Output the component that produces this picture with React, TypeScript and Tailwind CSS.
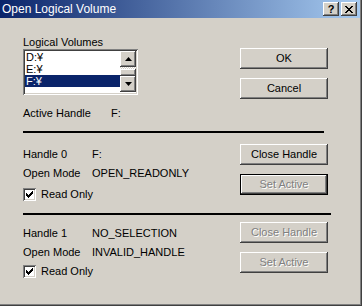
import React from 'react';

const raised =
  'bg-[#d4d0c8] shadow-[inset_-1px_-1px_#404040,inset_1px_1px_#ffffff,inset_-2px_-2px_#808080,inset_2px_2px_#d4d0c8]';
const sunken =
  'shadow-[inset_1px_1px_#808080,inset_-1px_-1px_#ffffff,inset_2px_2px_#404040,inset_-2px_-2px_#d4d0c8]';

const Button: React.FC<{ label: string; disabled?: boolean; isDefault?: boolean }> = ({ label, disabled, isDefault }) => (
  <div
    className={`h-[21px] w-[88px] flex items-center justify-center ${raised} ${
      isDefault ? 'border border-black' : ''
    } ${disabled ? 'text-[#808080] [text-shadow:1px_1px_0_#ffffff]' : 'text-black'}`}
  >
    {label}
  </div>
);

const Checkbox: React.FC<{ label: string }> = ({ label }) => (
  <div className="flex items-center h-[13px] gap-[5px]">
    <div className={`size-[13px] bg-white flex items-center justify-center ${sunken}`}>
      <svg width="7" height="7" viewBox="0 0 7 7">
        <path d="M0 2h1v1h1v1h1V3h1V2h1V1h1V0h1v3h-1v1h-1v1h-1v1h-1v1h-1V6H1V5H0z" fill="#000" />
      </svg>
    </div>
    <span>{label}</span>
  </div>
);

const Row: React.FC<{ label: string; value: string; labelWidth?: string; className?: string }> = ({
  label,
  value,
  labelWidth = 'w-[69px]',
  className = '',
}) => (
  <div className={`flex h-[13px] leading-[13px] ${className}`}>
    <span className={labelWidth}>{label}</span>
    <span>{value}</span>
  </div>
);

const Arrow: React.FC<{ up?: boolean }> = ({ up }) => (
  <div className={`h-[16px] w-[16px] flex items-center justify-center ${raised}`}>
    <svg width="7" height="4" viewBox="0 0 7 4">
      {up ? <path d="M3.5 0L7 4H0z" fill="#000" /> : <path d="M0 0h7L3.5 4z" fill="#000" />}
    </svg>
  </div>
);

const volumes = ['D:¥', 'E:¥', 'F:¥'];

export default function App() {
  return (
    <div className="w-[362px] h-[306px] bg-[#d4d0c8] flex flex-col overflow-hidden font-['Liberation_Sans',Arial,sans-serif] text-[11px] text-black shadow-[inset_-1px_-1px_#404040,inset_-2px_-2px_#808080]">
      {/* title bar */}
      <div className="h-[18px] mr-[2px] flex items-center justify-between bg-[linear-gradient(to_right,#0a246a,#a6caf0)] pl-[2px] pr-[3px]">
        <span className="text-white text-[12px] leading-none">Open Logical Volume</span>
        <div className="flex gap-[2px]">
          <div className={`w-[16px] h-[14px] flex items-center justify-center font-bold text-[11px] leading-none ${raised}`}>?</div>
          <div className={`w-[16px] h-[14px] flex items-center justify-center ${raised}`}>
            <svg width="8" height="7" viewBox="0 0 8 7">
              <path d="M0 0L7 7M1 0L8 7M7 0L0 7M8 0L1 7" stroke="#000" strokeWidth="1" />
            </svg>
          </div>
        </div>
      </div>

      <div className="pl-[23px] flex flex-col">
        {/* volumes */}
        <div className="flex">
          <div className="w-[217px] pt-[18px]">
            <div className="h-[13px] leading-[13px]">Logical Volumes</div>
            <div className={`h-[46px] w-[115px] bg-white p-[2px] flex ${sunken}`}>
              <div className="flex-1 pt-[0px]">
                {volumes.map((v) => (
                  <div
                    key={v}
                    className={`h-[12px] leading-[12px] pl-[1px] ${v === 'F:¥' ? 'bg-[#0a246a] text-white' : ''}`}
                  >
                    {v}
                  </div>
                ))}
              </div>
              <div className="w-[16px] flex flex-col">
                <Arrow up />
                <div className="h-[2px] bg-[repeating-conic-gradient(#ffffff_0_25%,#d4d0c8_0_50%)] bg-[length:2px_2px]" />
                <div className={`h-[7px] ${raised}`} />
                <Arrow />
              </div>
            </div>
            <Row label="Active Handle" value="F:" labelWidth="w-[88px]" className="mt-[12px]" />
          </div>
          <div className="pt-[30px] flex flex-col gap-[9px]">
            <Button label="OK" />
            <Button label="Cancel" />
          </div>
        </div>

        <div className="mt-[11px] h-[2px] w-[301px] bg-black" />

        {/* handle 0 */}
        <div className="flex">
          <div className="w-[217px] pt-[15px]">
            <Row label="Handle 0" value="F:" />
            <Row label="Open Mode" value="OPEN_READONLY" className="mt-[6px]" />
            <div className="mt-[8px]">
              <Checkbox label="Read Only" />
            </div>
          </div>
          <div className="pt-[11px] flex flex-col gap-[9px]">
            <Button label="Close Handle" />
            <Button label="Set Active" disabled isDefault />
          </div>
        </div>

        <div className="mt-[12px] h-[2px] w-[308px] bg-black" />

        {/* handle 1 */}
        <div className="flex">
          <div className="w-[217px] pt-[12px]">
            <Row label="Handle 1" value="NO_SELECTION" />
            <Row label="Open Mode" value="INVALID_HANDLE" className="mt-[6px]" />
            <div className="mt-[6px]">
              <Checkbox label="Read Only" />
            </div>
          </div>
          <div className="pt-[7px] flex flex-col gap-[9px]">
            <Button label="Close Handle" disabled />
            <Button label="Set Active" disabled />
          </div>
        </div>
      </div>
    </div>
  );
}
